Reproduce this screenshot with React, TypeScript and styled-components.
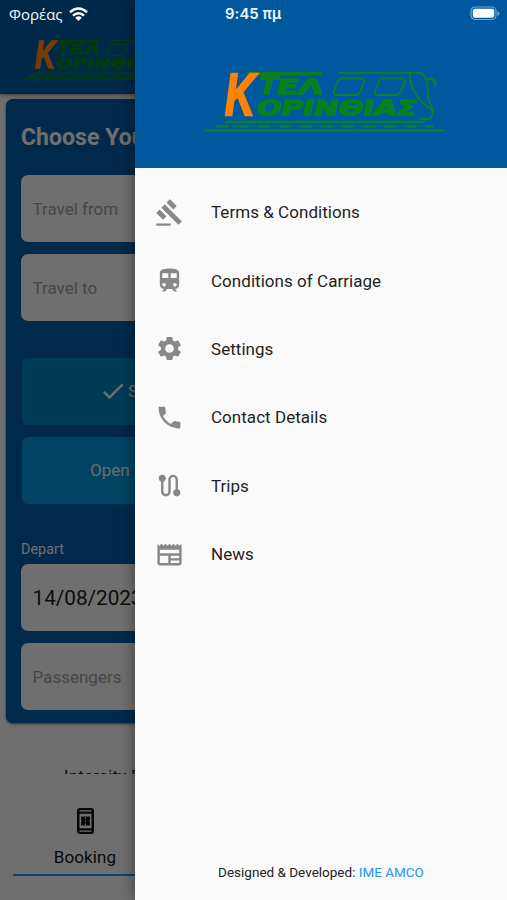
import React from 'react';
import styled, { createGlobalStyle } from 'styled-components';
import {
  MdGavel, MdTrain, MdSettings, MdPhone, MdRoute, MdNewspaper, MdCheck,
} from 'react-icons/md';

const GlobalStyle = createGlobalStyle`
  * { box-sizing: border-box; }
  body { margin: 0; overflow: hidden; font-family: Roboto, sans-serif; }
`;

const Screen = styled.div`
  position: relative;
  width: 507px;
  height: 900px;
  overflow: hidden;
  background: #f2f2f2;
`;

const Page = styled.div`
  display: flex;
  flex-direction: column;
  height: 900px;
`;

const Header = styled.header`
  height: 94px;
  flex: none;
  padding: 38px 0 0 21px;
  background: #00589f;
  box-shadow: 0 1px 4px rgba(0, 0, 0, 0.5);
`;

const Card = styled.section`
  display: flex;
  flex-direction: column;
  height: 624px;
  flex: none;
  margin: 5px 6px 0;
  padding: 0 15px;
  border-radius: 7px;
  background: #005aa3;
  box-shadow: 0 1px 3px rgba(0, 0, 0, 0.6);
`;

const Title = styled.h1`
  margin: 25px 0 22.500px;
  font-size: 23px;
  line-height: 28px;
  font-weight: 700;
  letter-spacing: 0.05px;
  color: #f2f2f2;
`;

const Field = styled.div<{ $filled?: boolean }>`
  display: flex;
  align-items: center;
  height: 67px;
  flex: none;
  margin-bottom: 12px;
  padding: 1px 11.500px 0;
  border-radius: 7px;
  background: #f2f2f2;
  color: ${(p) => (p.$filled ? '#1c1c1c' : '#9b9b9b')};
  font-size: ${(p) => (p.$filled ? '20.7px' : '17px')};
  letter-spacing: 0;
  white-space: nowrap;
`;

const Choices = styled.div`
  display: flex;
  flex-direction: column;
  gap: 12px;
  margin: 25px 1px 34.500px;
`;

const Choice = styled.div<{ $color: string; $inset: number }>`
  display: flex;
  align-items: center;
  gap: 1px;
  height: 67px;
  padding-left: ${(p) => p.$inset}px;
  border-radius: 6px;
  background: ${(p) => p.$color};
  color: #ececec;
  font-size: 17px;
  letter-spacing: 0;
  white-space: nowrap;
`;

const Label = styled.div`
  height: 22px;
  margin-bottom: 4px;
  font-size: 14.4px;
  line-height: 23px;
  color: #eeeeee;
`;

const Peek = styled.div`
  height: 9px;
  margin: 42px 0 0 64px;
  flex: none;
  overflow: hidden;
  font-size: 16px;
  line-height: 23px;
  letter-spacing: 0.6px;
  color: #111;
`;

const Tab = styled.nav`
  display: flex;
  flex-direction: column;
  align-items: center;
  width: 144px;
  height: 76px;
  margin: 26px 0 0 13px;
  padding-top: 7px;
  border-bottom: 2px solid #2196f3;
  color: #111;
  font-size: 17px;
  line-height: 22px;
  letter-spacing: 0.1px;

  svg { flex: none; margin-bottom: 11px; }
`;

const Scrim = styled.div`
  position: absolute;
  inset: 0;
  background: rgba(0, 0, 0, 0.54);
`;

const Drawer = styled.aside`
  position: absolute;
  inset: 0 0 0 135px;
  display: flex;
  flex-direction: column;
  background: #fafafa;
  box-shadow: 0 0 14px rgba(0, 0, 0, 0.45);
`;

const DrawerHead = styled.div`
  height: 168px;
  flex: none;
  padding: 69px 0 0 69px;
  background: #00589f;
`;

const Menu = styled.ul`
  margin: 10px 0 0;
  padding: 0;
  flex: 1;
  list-style: none;
`;

const MenuItem = styled.li`
  display: flex;
  align-items: center;
  gap: 27px;
  height: 68.4px;
  padding-left: 20px;
  color: #1f1f1f;
  font-size: 17px;
  letter-spacing: 0.04px;

  svg { flex: none; color: #888; }
`;

const Credit = styled.footer`
  height: 38px;
  text-align: center;
  font-size: 13.5px;
  line-height: 20px;
  color: #222;

  span { color: #2196f3; }
`;

const StatusBar = styled.div`
  position: absolute;
  inset: 0 0 auto;
  display: grid;
  grid-template-columns: 216px auto 1fr;
  align-items: center;
  height: 28px;
  padding: 0 7px 0 9px;
  color: #f4f8fc;
  font-family: Inter, sans-serif;
  font-size: 14.8px;
`;

const Carrier = styled.div`
  display: flex;
  align-items: center;
  gap: 6px;
  font-family: 'Open Sans', sans-serif;
  font-size: 15px;
`;

const Clock = styled.div`
  letter-spacing: 0.1px;
  font-weight: 600;
`;

const BatteryBox = styled.div`
  display: flex;
  justify-content: flex-end;
  margin-top: -2px;
`;

const LogoSvg = styled.svg`
  display: block;
`;

function Logo({ width }: { width: number }) {
  return (
    <LogoSvg width={width} height={(width * 64) / 241} viewBox="0 0 241 64">
      <g fill="none" stroke="#08802c" strokeWidth="1.9">
        <path d="M134 3.700H214Q219 3.700 221 8Q224 14 224 26Q224 32 228 38Q230 50 224 50H216" />
        <path d="M138 9.500H157Q161 9.500 160 13L156 23Q155 26 151 26H133Q129 26 130 22L134 12Q135 9.500 138 9.500Z" />
        <path d="M179 9.500H197Q202 9.500 201 13L196 23Q195 26 191 26H174Q170 26 171 22L175 12Q176 9.500 179 9.500Z" />
        <path d="M206 4Q206 17 211 24Q218 35 228 41" />
        <path d="M222 11Q228 8 231 13V17" strokeWidth="2.600" />
      </g>
      <g fill="#08801d" fontFamily="DejaVu Sans, sans-serif" fontWeight="700" stroke="#08801d" strokeWidth="1.400">
        <path d="M43 3H118V6.600H42Z" stroke="none" />
        <text transform="translate(53 24.500) skewX(-13)" fontSize="25.500" textLength="18" lengthAdjust="spacingAndGlyphs">Τ</text>
        <text transform="translate(71 24.500) skewX(-13)" fontSize="20.500" textLength="46" lengthAdjust="spacingAndGlyphs">ΕΛ</text>
        <text transform="translate(51 45.800) skewX(-13)" fontSize="20.500" textLength="160" lengthAdjust="spacingAndGlyphs">ΟΡΙΝΘΙΑΣ</text>
      </g>
      <text x="21" y="45.500" fill="#ff8206" stroke="#ff8206" strokeWidth="2.400" fontFamily="Liberation Sans, sans-serif" fontSize="59.500" fontWeight="700" fontStyle="italic" textLength="30" lengthAdjust="spacingAndGlyphs">K</text>
      <g fill="#08802e">
        <path d="M22 51.700H222L220 54.300H20Z" />
        <path d="M12 56H230V58.600H12Z" opacity=".4" />
        <path d="M0 60.400H241V62.600H0Z" />
      </g>
      <path d="M12 57.300H230" stroke="#08802e" strokeWidth="2.800" strokeDasharray="12 9" />
    </LogoSvg>
  );
}

function BookingIcon() {
  return (
    <svg width="19" height="28" viewBox="0 0 19 28">
      <path fillRule="evenodd" fill="currentColor" d="M4 1H15Q18 1 18 4V24Q18 27 15 27H4Q1 27 1 24V4Q1 1 4 1ZM3.500 3.200V4.600H15.500V3.200ZM3.500 6.800V21.200H15.500V6.800ZM3.500 23.400V24.800H15.500V23.400Z" />
      <path fill="currentColor" d="M5 9.500H14V12.300Q12.800 14 14 15.700V18.500H5V15.700Q6.200 14 5 12.300Z" />
      <path stroke="#f2f2f2" strokeWidth="1" strokeDasharray="1.500 1.500" d="M9.500 10.500V18" />
    </svg>
  );
}

const items = [
  { label: 'Terms & Conditions', Icon: MdGavel },
  { label: 'Conditions of Carriage', Icon: MdTrain },
  { label: 'Settings', Icon: MdSettings },
  { label: 'Contact Details', Icon: MdPhone },
  { label: 'Trips', Icon: MdRoute },
  { label: 'News', Icon: MdNewspaper },
];

export default function App() {
  return (
    <>
      <GlobalStyle />
      <Screen>
        <Page>
          <Header><Logo width={160} /></Header>
          <Card>
            <Title>Choose Your Trip</Title>
            <Field>Travel from</Field>
            <Field>Travel to</Field>
            <Choices>
              <Choice $color="#0080bc" $inset={77}><MdCheck size={28} />Single</Choice>
              <Choice $color="#0092d5" $inset={68}>Open Return</Choice>
            </Choices>
            <Label>Depart</Label>
            <Field $filled>14/08/2023</Field>
            <Field>Passengers</Field>
          </Card>
          <Peek>Intercity P</Peek>
          <Tab>
            <BookingIcon />
            Booking
          </Tab>
        </Page>
        <Scrim />
        <Drawer>
          <DrawerHead><Logo width={241} /></DrawerHead>
          <Menu>
            {items.map(({ label, Icon }) => (
              <MenuItem key={label}><Icon size={29} />{label}</MenuItem>
            ))}
          </Menu>
          <Credit>Designed &amp; Developed: <span>IME AMCO</span></Credit>
        </Drawer>
        <StatusBar>
          <Carrier>
            Φορέας
            <svg width="19" height="15" viewBox="0 0 19 15" fill="none" stroke="#fff" strokeWidth="2.5">
              <path d="M1 5.2Q9.500-2.300 18 5.200M4 8.600Q9.500 3.800 15 8.600" />
              <path d="M9.500 14L6.200 10.700Q9.500 8 12.800 10.700Z" fill="#fff" stroke="none" />
            </svg>
          </Carrier>
          <Clock>9:45 πμ</Clock>
          <BatteryBox>
            <svg width="30" height="15" viewBox="0 0 30 15">
              <rect x="1" y="1" width="25" height="12.500" rx="4" fill="none" stroke="#78a5cd" strokeWidth="1.200" />
              <rect x="2.800" y="2.800" width="21.400" height="9" rx="2" fill="#fff" />
              <path d="M27.500 5V10Q29.500 9 29.500 7.500T27.500 5Z" fill="#78a5cd" />
            </svg>
          </BatteryBox>
        </StatusBar>
      </Screen>
    </>
  );
}
